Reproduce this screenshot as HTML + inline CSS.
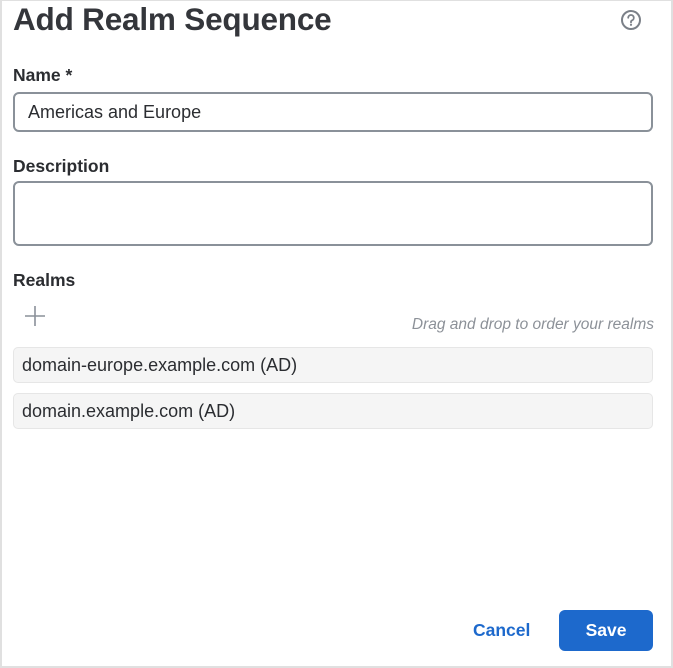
<!DOCTYPE html>
<html><head><meta charset="utf-8"><style>
*{box-sizing:border-box;margin:0;padding:0}
html,body{width:673px;height:668px;overflow:hidden;background:#fff;font-family:"Liberation Sans",sans-serif;color:#2b2d31}
.frame{position:absolute;left:0;top:0;width:673px;height:668px;border:2px solid #e0e0e0;border-top-width:1px}
.abs{position:absolute}
h1{position:absolute;left:13px;top:1px;font-size:31.5px;font-weight:700;color:#34363b;letter-spacing:-0.2px;white-space:nowrap}
.lbl{position:absolute;left:13px;font-size:17.5px;font-weight:700;color:#2b2d31}
.inp{position:absolute;left:13px;width:640px;border:2px solid #8a9199;border-radius:6px}
.row{position:absolute;left:13px;width:640px;height:36px;background:#f5f5f5;border:1px solid #e6e6e6;border-radius:5px;font-size:18px;line-height:34px;padding-left:8px;color:#2b2d31;white-space:nowrap}
</style></head><body>
<div class="frame"></div>
<h1>Add Realm Sequence</h1>
<svg class="abs" style="left:620px;top:9px" width="22" height="22" viewBox="0 0 22 22"><circle cx="11" cy="11" r="9" fill="none" stroke="#7b8088" stroke-width="2"/><path d="M8.2 8.8a2.8 2.8 0 1 1 3.8 2.6c-.7.3-1 .8-1 1.5v.6" fill="none" stroke="#7b8088" stroke-width="1.8" stroke-linecap="round"/><circle cx="11" cy="15.8" r="1.1" fill="#7b8088"/></svg>
<div class="lbl" style="top:65px">Name *</div>
<div class="inp" style="top:92px;height:40px;font-size:18px;line-height:36px;padding-left:13px">Americas and Europe</div>
<div class="lbl" style="top:156px">Description</div>
<div class="inp" style="top:181px;height:65px"></div>
<div class="lbl" style="top:270px">Realms</div>
<svg class="abs" style="left:24px;top:305px" width="22" height="22"><path d="M11 1v20M1 11h20" stroke="#8a9099" stroke-width="1.6"/></svg>
<div class="abs" style="right:19px;top:316px;font-size:15.5px;font-style:italic;color:#8c9198;white-space:nowrap">Drag and drop to order your realms</div>
<div class="row" style="top:347px">domain-europe.example.com (AD)</div>
<div class="row" style="top:393px">domain.example.com (AD)</div>
<div class="abs" style="left:473px;top:620px;font-size:17.5px;font-weight:700;color:#1d69cc">Cancel</div>
<div class="abs" style="left:559px;top:610px;width:94px;height:41px;background:#1d69cc;border-radius:6px;color:#fff;font-size:17.5px;font-weight:700;text-align:center;line-height:41px">Save</div>
</body></html>
